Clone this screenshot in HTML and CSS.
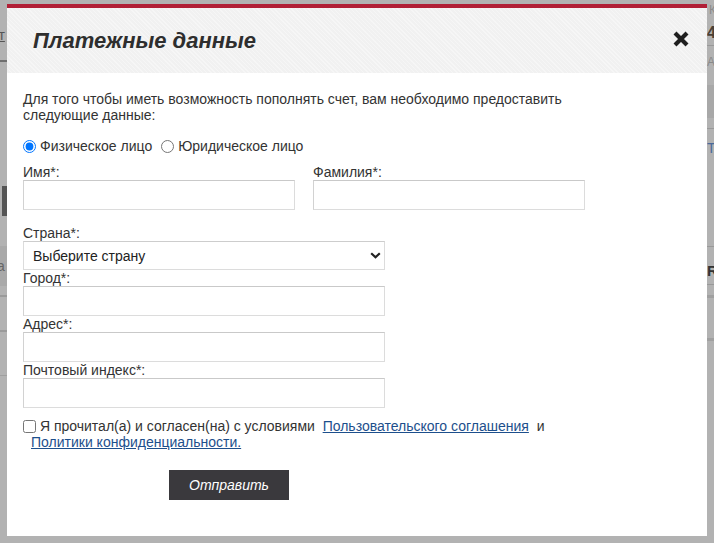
FILE: index.html
```html
<!DOCTYPE html>
<html lang="ru">
<head>
<meta charset="utf-8">
<title>Платежные данные</title>
<link rel="stylesheet" href="styles.css">
</head>
<body>
<div class="backdrop">
  <span class="bg bg-l1">ат</span>
  <span class="bg bg-l2"></span>
  <span class="bg bg-l3"></span>
  <span class="bg bg-l4"><span class="bg-l4t">а</span></span>
  <span class="bg bg-l5"></span>
  <span class="bg bg-l6"></span>
  <span class="bg bg-l7"></span>
  <span class="bg bg-r1">К</span>
  <span class="bg bg-r2">4(</span>
  <span class="bg bg-r3"></span>
  <span class="bg bg-r4">АТ</span>
  <span class="bg bg-r5"></span>
  <span class="bg bg-r6"></span>
  <span class="bg bg-r7">Т</span>
  <span class="bg bg-r8"></span>
  <span class="bg bg-r9">R</span>
  <span class="bg bg-r10"></span>
  <span class="bg bg-r11"></span>
  <span class="bg bg-r12"></span>
</div>

<div class="modal">
  <div class="modal-header">
    <h2 class="modal-title">Платежные данные</h2>
    <svg class="close" width="18" height="18" viewBox="0 0 18 18" aria-label="Закрыть">
      <path d="M3 3 L15 15 M15 3 L3 15" stroke="#1e1e1e" stroke-width="4.2" stroke-linecap="butt" fill="none"/>
    </svg>
  </div>
  <div class="modal-body">
    <p class="intro">Для того чтобы иметь возможность пополнять счет, вам необходимо предоставить следующие данные:</p>
    <div class="radio-row">
      <label class="radio"><input type="radio" name="type" checked> Физическое лицо</label>
      <label class="radio"><input type="radio" name="type"> Юридическое лицо</label>
    </div>
    <div class="name-row">
      <div class="field">
        <label class="lbl">Имя*:</label>
        <input class="inp" type="text">
      </div>
      <div class="field">
        <label class="lbl">Фамилия*:</label>
        <input class="inp" type="text">
      </div>
    </div>
    <div class="field wide country">
      <label class="lbl">Страна*:</label>
      <div class="select-wrap">
        <select class="sel"><option>Выберите страну</option></select>
        <svg class="chev" width="11" height="7" viewBox="0 0 11 7"><path d="M1.2 1.2 L5.5 5.3 L9.8 1.2" stroke="#222" stroke-width="2.2" fill="none"/></svg>
      </div>
    </div>
    <div class="field wide">
      <label class="lbl">Город*:</label>
      <input class="inp" type="text">
    </div>
    <div class="field wide">
      <label class="lbl">Адрес*:</label>
      <input class="inp" type="text">
    </div>
    <div class="field wide">
      <label class="lbl">Почтовый индекс*:</label>
      <input class="inp" type="text">
    </div>
    <div class="agree">
      <input type="checkbox" class="chk"> Я прочитал(а) и согласен(на) с условиями&nbsp; <a href="#" class="link">Пользовательского соглашения</a>&nbsp; и<br><a href="#" class="link link2">Политики конфиденциальности.</a>
    </div>
    <button class="btn" type="button">Отправить</button>
  </div>
</div>
</body>
</html>
```

FILE: styles.css
```css
html, body {
  margin: 0;
  padding: 0;
}
body {
  background: #b2b2b2;
  width: 714px;
  height: 543px;
  overflow: hidden;
  position: relative;
  font-family: "Liberation Sans", Arial, sans-serif;
  font-size: 14px;
  color: #333;
}

/* page underneath the overlay */
.backdrop { position: absolute; inset: 0; }
.bg { position: absolute; display: block; }
.bg-l1 { left: -9px; top: 27px; font-size: 14px; color: #555; text-decoration: underline; }
.bg-l2 { left: 0; top: 60px; width: 7px; height: 2px; background: #6f6f6f; }
.bg-l3 { left: 2px; top: 186px; width: 5px; height: 30px; background: #555; }
.bg-l4 { left: 0; top: 246px; width: 7px; height: 40px; background: #a9a9a9; }
.bg-l4t { position: absolute; left: -3px; top: 12px; font-size: 14px; color: #666; }
.bg-l5 { left: 0; top: 295px; width: 7px; height: 2px; background: #9a9a9a; }
.bg-l6 { left: 0; top: 330px; width: 7px; height: 2px; background: #9a9a9a; }
.bg-l7 { left: 0; top: 375px; width: 7px; height: 1px; background: #9f9f9f; }
.bg-r1 { left: 709px; top: 3px; font-size: 12px; color: #8a8a8a; }
.bg-r2 { left: 707px; top: 24px; font-size: 16px; font-weight: bold; color: #4a4036; }
.bg-r3 { left: 707px; top: 45px; width: 7px; height: 1px; background: #999; }
.bg-r4 { left: 707px; top: 55px; font-size: 12px; color: #8a8a8a; }
.bg-r5 { left: 707px; top: 85px; width: 7px; height: 33px; background: #a8a8a8; }
.bg-r6 { left: 707px; top: 128px; width: 7px; height: 1px; background: #999; }
.bg-r7 { left: 707px; top: 140px; font-size: 14px; color: #4a6a9a; }
.bg-r8 { left: 707px; top: 246px; width: 7px; height: 1px; background: #999; }
.bg-r9 { left: 707px; top: 262px; font-size: 15px; font-weight: bold; color: #333; }
.bg-r10 { left: 707px; top: 284px; width: 7px; height: 1px; background: #999; }
.bg-r11 { left: 707px; top: 295px; width: 7px; height: 3px; background: #a0a0a0; }
.bg-r12 { left: 707px; top: 338px; width: 7px; height: 3px; background: #a0a0a0; }

/* modal */
.modal {
  position: absolute;
  left: 7px;
  top: 4px;
  width: 700px;
  height: 528px;
  background: #fff;
  border-top: 4px solid #b11f36;
  display: flex;
  flex-direction: column;
}
.modal-header {
  height: 65px;
  background-color: #f1f1f1;
  background-image: repeating-linear-gradient(45deg, rgba(255,255,255,0.35) 0 1px, transparent 1px 3px);
  display: flex;
  align-items: center;
  justify-content: space-between;
  padding: 0 17px 0 26px;
  flex-shrink: 0;
}
.modal-title {
  margin: 0;
  font-size: 22px;
  font-weight: bold;
  font-style: italic;
  color: #2e2e2e;
  line-height: normal;
}
.close { display: block; margin-bottom: 4px; }

.modal-body {
  padding: 18px 16px 0 16px;
  display: flex;
  flex-direction: column;
}
.intro {
  margin: 0;
  width: 562px;
  line-height: 16px;
}
.radio-row {
  margin-top: 14px;
  height: 18px;
  display: flex;
  align-items: center;
  gap: 9px;
  line-height: 16px;
}
.radio { display: flex; align-items: center; gap: 4px; }
.radio input {
  margin: 0;
  width: 13px;
  height: 13px;
  accent-color: #0075ff;
}

.name-row {
  margin-top: 9px;
  display: grid;
  grid-template-columns: 272px 272px;
  column-gap: 18px;
}
.field { display: flex; flex-direction: column; }
.wide { width: 362px; }
.country { margin-top: 15px; }
.lbl {
  display: block;
  line-height: 16px;
  height: 16px;
  color: #333;
}
.inp {
  box-sizing: border-box;
  height: 30px;
  width: 100%;
  margin: 0;
  border: 1px solid #dcdcdc;
  border-top-color: #c9c9c9;
  border-left-color: #d2d2d2;
  background: #fff;
  font-family: inherit;
  font-size: 14px;
}
.select-wrap { position: relative; }
.sel {
  box-sizing: border-box;
  appearance: none;
  -webkit-appearance: none;
  width: 100%;
  height: 29px;
  margin: 0;
  padding: 0 0 0 9px;
  border: 1px solid #dcdcdc;
  border-top-color: #cdcdcd;
  border-radius: 0;
  background: #fff;
  font-family: inherit;
  font-size: 14px;
  color: #222;
}
.chev { position: absolute; right: 4px; top: 11px; pointer-events: none; }

.agree {
  margin-top: 10px;
  line-height: 16px;
  color: #333;
}
.chk {
  margin: 0;
  width: 13px;
  height: 13px;
  vertical-align: -2px;
}
.link { color: #1d4f8c; text-decoration: underline; }
.link2 { margin-left: 8px; }

.btn {
  margin-top: 20px;
  margin-left: 146px;
  width: 120px;
  height: 30px;
  border: 0;
  background: #3a393d;
  color: #fff;
  font-family: inherit;
  font-size: 14px;
  font-style: italic;
  padding: 0;
  cursor: pointer;
}
```
